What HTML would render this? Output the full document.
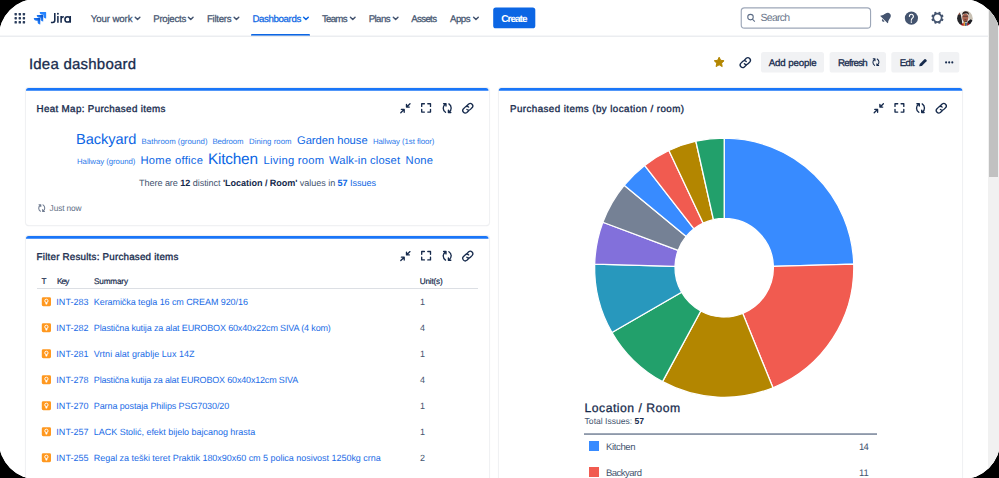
<!DOCTYPE html>
<html lang="en">
<head>
<meta charset="utf-8">
<title>Idea dashboard - Jira</title>
<style>
*{box-sizing:border-box;margin:0;padding:0}
html,body{width:999px;height:478px;overflow:hidden;background:#000}
body{font-family:"Liberation Sans",sans-serif;position:relative}
#clip{position:absolute;left:-1.1px;top:-1.1px;width:1001.2px;height:480.2px;border-radius:37.7px;overflow:hidden;background:#fff}
#frame{position:absolute;left:1.1px;top:1.1px;width:999px;height:478px;background:#fff}
.t{position:absolute;white-space:pre;line-height:normal;font-family:"Liberation Sans",sans-serif;text-rendering:geometricPrecision}
.abs{position:absolute}
.card{position:absolute;background:#fff;border-radius:3px;box-shadow:0 0 0 1px #F0F1F3, 0 0 2px rgba(9,30,66,.10), 0 1px 1px rgba(9,30,66,.15)}
#dashul{left:251.2px;top:33.8px;width:58.8px;height:2.4px;background:#0C66E4;border-radius:1px 1px 0 0}
#sbtrack{left:988px;top:0;width:11px;height:478px;background:#F1F1F1}
#sbthumb{left:989px;top:0;width:9px;height:177px;background:#C1C1C1}
svg.ov{position:absolute;left:0;top:0;width:999px;height:478px;overflow:visible}
</style>
</head>
<body>
<div id="clip"><div id="frame">
<!-- nav -->
<div id="dashul" class="abs"></div>
<!-- header buttons -->
<!-- cards -->
<div class="card" style="left:26px;top:88px;width:462.5px;height:137.4px"></div>
<div class="card" style="left:26px;top:236px;width:462.5px;height:300px"></div>
<div class="card" style="left:498.8px;top:88px;width:463.5px;height:450px"></div>
<div class="abs" style="left:36.6px;top:288px;width:441.4px;height:1px;background:#DCDFE4"></div>
<div class="abs" style="left:584.2px;top:433px;width:292.8px;height:2px;background:linear-gradient(#A9B1BF,#8590A2)"></div>
<!-- legend swatches -->
<div class="abs" style="left:589px;top:441px;width:10.2px;height:10.2px;background:#388BFF"></div>
<div class="abs" style="left:589px;top:466.8px;width:10.2px;height:10.2px;background:#F15B50"></div>

<svg class="ov" viewBox="0 0 999 478">
<defs>
<linearGradient id="jg" x1="0.9" y1="0.1" x2="0.45" y2="0.6"><stop offset="0.15" stop-color="#0C57D0"/><stop offset="1" stop-color="#2684FF"/></linearGradient>
<g id="ic-collapse" fill="none" stroke="#172B4D" stroke-width="1.35" stroke-linecap="round" stroke-linejoin="round">
<path d="M10.3 0.9 L7 4 M6.8 1.4 V4.2 H9.6"/><path d="M1.1 9.800 L4.300 6.700 M1.700 6.500 H4.500 V9.300"/></g>
<g id="ic-expand" fill="none" stroke="#172B4D" stroke-width="1.35" stroke-linecap="round" stroke-linejoin="round">
<path d="M0.7 3.4V0.7H3.4M6.8 0.7H9.5V3.4M9.5 6.4V9.1H6.8M3.4 9.1H0.7V6.4"/></g>
<g id="ic-refresh" fill="none" stroke="#172B4D" stroke-width="1.35" stroke-linecap="round" stroke-linejoin="round">
<path d="M3.6 9.2C0.6 7.2 0.6 3.2 3.4 1.2M1.7 0.6H4.1V3"/><path d="M7 0.8C10 2.8 10 6.8 7.2 8.8M8.9 9.4H6.5V7"/></g>
<g id="ic-link" fill="none" stroke="#172B4D" stroke-width="1.22" stroke-linecap="round" stroke-linejoin="round" transform="translate(-0.45,-0.45) scale(1.08)">
<path d="M5.1 3.3l1.7-1.7a2.35 2.35 0 0 1 3.3 3.3L8.4 6.6a2.35 2.35 0 0 1-3.3 0"/><path d="M6.8 7.8L5.1 9.5a2.35 2.35 0 0 1-3.3-3.3l1.7-1.7a2.35 2.35 0 0 1 3.3 0"/></g>
</defs>

<rect x="0" y="35.55" width="988" height="1.35" fill="#E9EBEF"/>
<!-- card top bars -->
<g fill="#1A76F8">
<path d="M26 91V90.6a2.600 2.600 0 0 1 2.600-2.600H485.900a2.600 2.600 0 0 1 2.600 2.600V90.850H26z"/>
<path d="M26 239V238.600a2.600 2.600 0 0 1 2.600-2.600H485.900a2.600 2.600 0 0 1 2.600 2.600V238.700H26z"/>
<path d="M498.800 91V90.600a2.600 2.600 0 0 1 2.600-2.600H959.700a2.600 2.600 0 0 1 2.600 2.600V90.850H498.800z"/>
</g>
<!-- app switcher -->
<g fill="#2C3E5D"><rect x="14.5" y="13.00" width="2.4" height="2.4" rx=".6"/><rect x="18.6" y="13.00" width="2.4" height="2.4" rx=".6"/><rect x="22.7" y="13.00" width="2.4" height="2.4" rx=".6"/><rect x="14.5" y="17.05" width="2.4" height="2.4" rx=".6"/><rect x="18.6" y="17.05" width="2.4" height="2.4" rx=".6"/><rect x="22.7" y="17.05" width="2.4" height="2.4" rx=".6"/><rect x="14.5" y="21.10" width="2.4" height="2.4" rx=".6"/><rect x="18.6" y="21.10" width="2.4" height="2.4" rx=".6"/><rect x="22.7" y="21.10" width="2.4" height="2.4" rx=".6"/></g>
<!-- jira software logo -->
<g transform="translate(32,10.1) scale(0.495)">
<path d="M27.545 4H15.53a5.423 5.423 0 0 0 5.422 5.423h2.213v2.137A5.423 5.423 0 0 0 28.584 16.98V5.04A1.04 1.04 0 0 0 27.545 4z" fill="#2684FF"/>
<path d="M21.6 9.987H9.585a5.423 5.423 0 0 0 5.421 5.421h2.214v2.144a5.423 5.423 0 0 0 5.421 5.414V11.027a1.04 1.04 0 0 0-1.04-1.04z" fill="url(#jg)"/>
<path d="M15.652 15.97H3.637a5.423 5.423 0 0 0 5.422 5.423h2.22v2.137a5.423 5.423 0 0 0 5.414 5.421V17.01a1.04 1.04 0 0 0-1.04-1.04z" fill="url(#jg)"/>
</g>
<!-- "Jira" wordmark drawn as paths -->
<g transform="translate(-0.5,0)" fill="none" stroke="#172B4D" stroke-width="1.55" stroke-linecap="butt" stroke-linejoin="round">
<path d="M55.3 12.9V20.2a2.2 2.2 0 0 1-2.2 2.2H51.4"/>
<path d="M58.4 16.1V22.7"/>
<path d="M61.6 22.7V16.1M61.6 19.3a2.6 2.6 0 0 1 2.7-2.6"/>
<circle cx="68.1" cy="19.4" r="2.65"/><path d="M70.75 16.1V22.7"/>
</g>
<circle cx="57.9" cy="13.7" r="0.95" fill="#172B4D"/>

<!-- nav chevrons -->
<g fill="none" stroke-width="1.5" stroke-linecap="round" stroke-linejoin="round"><path d="M135.25 17.3 l2.3 2.2 l2.3 -2.2" stroke="#44546F"/><path d="M188.45 17.3 l2.3 2.2 l2.3 -2.2" stroke="#44546F"/><path d="M234.15 17.3 l2.3 2.2 l2.3 -2.2" stroke="#44546F"/><path d="M303.65 17.3 l2.3 2.2 l2.3 -2.2" stroke="#0C66E4"/><path d="M350.45 17.3 l2.3 2.2 l2.3 -2.2" stroke="#44546F"/><path d="M393.35 17.3 l2.3 2.2 l2.3 -2.2" stroke="#44546F"/><path d="M473.65 17.3 l2.3 2.2 l2.3 -2.2" stroke="#44546F"/></g>

<rect x="493.2" y="7.5" width="42.1" height="20.8" rx="2.6" fill="#0C66E4"/>
<!-- search box + magnifier -->
<rect x="741.25" y="7.85" width="129.3" height="20.3" rx="3.2" fill="#fff" stroke="#9DA7B8" stroke-width="1.15"/>
<g fill="none" stroke="#5B6B85" stroke-width="1.05" stroke-linecap="round"><circle cx="750.5" cy="17.1" r="2.75"/><path d="M752.6 19.3l2 2"/></g>

<!-- bell (tilted) -->
<g transform="translate(885.9,17.7) rotate(45)" fill="#44546F">
<path d="M-5.200 2.700V2C-4 1.200 -3.600 -0.600 -3.300 -2.200C-2.800 -5 -1.400 -5.700 0 -5.700C1.400 -5.700 2.800 -5 3.300 -2.200C3.600 -0.600 4 1.200 5.200 2V2.700Z"/>
<path d="M-1.500 3.500H1.500A1.500 1.500 0 0 1 -1.500 3.500Z"/>
</g>
<!-- help -->
<circle cx="911.4" cy="18.1" r="6.6" fill="#44546F"/>
<path d="M909.4 16.3a2 2 0 1 1 3.1 1.65c-.8.5-1.15.9-1.15 2.2" fill="none" stroke="#fff" stroke-width="1.2" stroke-linecap="round"/>
<circle cx="911.35" cy="22.1" r=".8" fill="#fff"/>
<!-- gear -->
<g transform="translate(937.45,17.85)">
<g fill="#44546F">
<rect x="-1.15" y="-6.2" width="2.3" height="12.4" rx=".5" transform="rotate(22.5)"/>
<rect x="-1.15" y="-6.2" width="2.3" height="12.4" rx=".5" transform="rotate(67.5)"/>
<rect x="-1.15" y="-6.2" width="2.3" height="12.4" rx=".5" transform="rotate(112.5)"/>
<rect x="-1.15" y="-6.2" width="2.3" height="12.4" rx=".5" transform="rotate(157.5)"/>
</g>
<circle r="4.2" fill="#fff" stroke="#44546F" stroke-width="1.7"/>
</g>
<!-- avatar -->
<defs><clipPath id="av"><circle cx="964.9" cy="18.25" r="7.85"/></clipPath><filter id="avb" x="-20%" y="-20%" width="140%" height="140%"><feGaussianBlur stdDeviation="0.45"/></filter></defs>
<g clip-path="url(#av)"><g filter="url(#avb)">
<rect x="955" y="8" width="20" height="21" fill="#EFEDEA"/>
<path d="M966 8h9v14h-5z" fill="#C9C1B4"/>
<path d="M955 30V13.5l3.2-1.200 2.600 2.400 1 5.300 1.200 10z" fill="#26262B"/>
<ellipse cx="958.6" cy="13.4" rx="1.5" ry="1.7" fill="#8A5546"/>
<path d="M967.500 21.500l3.200-2.200 4.300 2.700V30h-8z" fill="#1F1F24"/>
<ellipse cx="965.3" cy="17.6" rx="3.1" ry="3.9" fill="#A9634F"/>
<path d="M962.100 15.600c-.7-5.600 7.300-5.900 7-.4l-.8-1.300c-1.700-.5-3.700-.5-5.300.2z" fill="#2A1E1A"/>
<rect x="962.700" y="15.700" width="5.400" height="1.200" rx=".5" fill="#5E3A33" opacity=".75"/>
<ellipse cx="965.400" cy="19.600" rx="1.300" ry=".6" fill="#7A3F36"/>
<path d="M963.400 19.900c1.200 1.300 2.700 1.300 3.900 0l-.3 2.200h-3.300z" fill="#6B4438"/>
<path d="M960.800 30l.8-5.800 1.900-1.800 1.500 7.600z" fill="#B01E24"/>
<path d="M967.300 22.800l2.300 1.300 .8 5.900h-3.400z" fill="#A81C22"/>
<rect x="963.7" y="21.900" width="1.300" height="6" fill="#DB9A33"/>
<rect x="965.200" y="22.600" width="1.500" height="6" fill="#253A63"/>
</g></g>

<g fill="#F1F2F4"><rect x="761" y="51.9" width="63" height="20.6" rx="2.6"/><rect x="829.6" y="51.9" width="56.4" height="20.6" rx="2.6"/><rect x="891.3" y="51.9" width="42" height="20.6" rx="2.6"/><rect x="938.8" y="51.9" width="20.5" height="20.6" rx="2.6"/></g>
<!-- star -->
<path d="M719.15 57.2l1.5 3.1 3.4.45-2.5 2.4.65 3.4-3.05-1.7-3.05 1.7.65-3.4-2.5-2.4 3.4-.45z" fill="#B38600" stroke="#B38600" stroke-width="1" stroke-linejoin="round"/>
<!-- header link icon -->
<use href="#ic-link" transform="translate(739.2,57) scale(1.02)"/>
<!-- refresh btn icon -->
<use href="#ic-refresh" transform="translate(871.9,58.4) scale(0.76)"/>
<!-- pencil -->
<g transform="translate(919.2,66.3)" fill="#172B4D"><path d="M0 0l.55-2.350 4.700-4.700a.85.85 0 0 1 1.200 0l.85.850a.85.85 0 0 1 0 1.200l-4.700 4.700z"/></g>
<!-- more dots -->
<g fill="#172B4D"><circle cx="946.1" cy="62.4" r="1.05"/><circle cx="949.2" cy="62.4" r="1.05"/><circle cx="952.3" cy="62.4" r="1.05"/></g>

<!-- gadget action icons -->
<use href="#ic-collapse" transform="translate(399.7,102.9)"/><use href="#ic-expand" transform="translate(421,103)"/><use href="#ic-refresh" transform="translate(441.9,103.1)"/><use href="#ic-link" transform="translate(461.8,102.7)"/>
<use href="#ic-collapse" transform="translate(399.7,250.7)"/><use href="#ic-expand" transform="translate(421,250.800)"/><use href="#ic-refresh" transform="translate(441.9,250.900)"/><use href="#ic-link" transform="translate(461.8,250.500)"/>
<use href="#ic-collapse" transform="translate(873.1,102.9)"/><use href="#ic-expand" transform="translate(894.3,103)"/><use href="#ic-refresh" transform="translate(915.2,103.1)"/><use href="#ic-link" transform="translate(935.3,102.7)"/>
<!-- just now icon -->
<g opacity=".62"><use href="#ic-refresh" transform="translate(37.7,204.300) scale(0.76)"/></g>

<!-- table issue type icons -->
<g transform="translate(41.8,297.3)"><rect width="9.2" height="8.9" rx="1.4" fill="#FF981F"/><circle cx="4.6" cy="3.55" r="1.65" fill="none" stroke="#fff" stroke-width="0.95"/><path d="M3.3 5.2h2.6l-.7 2h-1.200z" fill="#fff"/></g><g transform="translate(41.8,323.3)"><rect width="9.2" height="8.9" rx="1.4" fill="#FF981F"/><circle cx="4.6" cy="3.55" r="1.65" fill="none" stroke="#fff" stroke-width="0.95"/><path d="M3.3 5.2h2.6l-.7 2h-1.200z" fill="#fff"/></g><g transform="translate(41.8,349.3)"><rect width="9.2" height="8.9" rx="1.4" fill="#FF981F"/><circle cx="4.6" cy="3.55" r="1.65" fill="none" stroke="#fff" stroke-width="0.95"/><path d="M3.3 5.2h2.6l-.7 2h-1.200z" fill="#fff"/></g><g transform="translate(41.8,375.3)"><rect width="9.2" height="8.9" rx="1.4" fill="#FF981F"/><circle cx="4.6" cy="3.55" r="1.65" fill="none" stroke="#fff" stroke-width="0.95"/><path d="M3.3 5.2h2.6l-.7 2h-1.200z" fill="#fff"/></g><g transform="translate(41.8,401.3)"><rect width="9.2" height="8.9" rx="1.4" fill="#FF981F"/><circle cx="4.6" cy="3.55" r="1.65" fill="none" stroke="#fff" stroke-width="0.95"/><path d="M3.3 5.2h2.6l-.7 2h-1.200z" fill="#fff"/></g><g transform="translate(41.8,427.3)"><rect width="9.2" height="8.9" rx="1.4" fill="#FF981F"/><circle cx="4.6" cy="3.55" r="1.65" fill="none" stroke="#fff" stroke-width="0.95"/><path d="M3.3 5.2h2.6l-.7 2h-1.200z" fill="#fff"/></g><g transform="translate(41.8,453.3)"><rect width="9.2" height="8.9" rx="1.4" fill="#FF981F"/><circle cx="4.6" cy="3.55" r="1.65" fill="none" stroke="#fff" stroke-width="0.95"/><path d="M3.3 5.2h2.6l-.7 2h-1.200z" fill="#fff"/></g>

<!-- donut -->
<g stroke="#fff" stroke-width="1.3" stroke-linejoin="round"><path d="M724.20 138.10A129.6 129.6 0 0 1 853.75 264.13L773.38 266.34A49.2 49.2 0 0 0 724.20 218.50Z" fill="#388BFF"/><path d="M853.75 264.13A129.6 129.6 0 0 1 772.97 387.77L742.71 313.28A49.2 49.2 0 0 0 773.38 266.34Z" fill="#F15B50"/><path d="M772.97 387.77A129.6 129.6 0 0 1 662.52 381.68L700.78 310.97A49.2 49.2 0 0 0 742.71 313.28Z" fill="#B38600"/><path d="M662.52 381.68A129.6 129.6 0 0 1 611.96 332.50L681.59 292.30A49.2 49.2 0 0 0 700.78 310.97Z" fill="#22A06B"/><path d="M611.96 332.50A129.6 129.6 0 0 1 594.65 264.13L675.02 266.34A49.2 49.2 0 0 0 681.59 292.30Z" fill="#2898BD"/><path d="M594.65 264.13A129.6 129.6 0 0 1 602.83 222.26L678.12 250.45A49.2 49.2 0 0 0 675.02 266.34Z" fill="#8270DB"/><path d="M602.83 222.26A129.6 129.6 0 0 1 624.16 185.31L686.22 236.42A49.2 49.2 0 0 0 678.12 250.45Z" fill="#758195"/><path d="M624.16 185.31A129.6 129.6 0 0 1 644.60 165.43L693.98 228.87A49.2 49.2 0 0 0 686.22 236.42Z" fill="#388BFF"/><path d="M644.60 165.43A129.6 129.6 0 0 1 668.89 150.50L703.20 223.21A49.2 49.2 0 0 0 693.98 228.87Z" fill="#F15B50"/><path d="M668.89 150.50A129.6 129.6 0 0 1 695.86 141.24L713.44 219.69A49.2 49.2 0 0 0 703.20 223.21Z" fill="#B38600"/><path d="M695.86 141.24A129.6 129.6 0 0 1 724.20 138.10L724.20 218.50A49.2 49.2 0 0 0 713.44 219.69Z" fill="#22A06B"/></g>
</svg>

<!-- text -->
<span class="t" style="left:90.75px;top:14px;font-size:9.7px;color:#44546F;letter-spacing:-0.121px;-webkit-text-stroke:0.25px #44546F;">Your work</span>
<span class="t" style="left:153.25px;top:14px;font-size:9.7px;color:#44546F;letter-spacing:-0.286px;-webkit-text-stroke:0.25px #44546F;">Projects</span>
<span class="t" style="left:207.00px;top:14px;font-size:9.7px;color:#44546F;letter-spacing:-0.312px;-webkit-text-stroke:0.25px #44546F;">Filters</span>
<span class="t" style="left:252.50px;top:14px;font-size:9.7px;color:#0C66E4;letter-spacing:-0.389px;-webkit-text-stroke:0.25px #0C66E4;">Dashboards</span>
<span class="t" style="left:322.00px;top:14px;font-size:9.7px;color:#44546F;letter-spacing:-0.762px;-webkit-text-stroke:0.25px #44546F;">Teams</span>
<span class="t" style="left:368.75px;top:14px;font-size:9.7px;color:#44546F;letter-spacing:-0.621px;-webkit-text-stroke:0.25px #44546F;">Plans</span>
<span class="t" style="left:411.25px;top:14px;font-size:9.7px;color:#44546F;letter-spacing:-0.666px;-webkit-text-stroke:0.25px #44546F;">Assets</span>
<span class="t" style="left:450.00px;top:14px;font-size:9.7px;color:#44546F;letter-spacing:-0.531px;-webkit-text-stroke:0.25px #44546F;">Apps</span>
<span class="t" style="left:501.25px;top:14px;font-size:10px;color:#FFFFFF;font-weight:700;letter-spacing:-0.978px;">Create</span>
<span class="t" style="left:760.60px;top:12px;font-size:10.5px;color:#6B778C;letter-spacing:-0.776px;">Search</span>
<span class="t" style="left:28.90px;top:56px;font-size:15px;color:#172B4D;letter-spacing:0.226px;-webkit-text-stroke:0.3px #172B4D;">Idea dashboard</span>
<span class="t" style="left:768.80px;top:58px;font-size:9.7px;color:#172B4D;letter-spacing:-0.137px;-webkit-text-stroke:0.3px #172B4D;">Add people</span>
<span class="t" style="left:837.90px;top:58px;font-size:9.7px;color:#172B4D;letter-spacing:-0.687px;-webkit-text-stroke:0.3px #172B4D;">Refresh</span>
<span class="t" style="left:899.70px;top:58px;font-size:9.7px;color:#172B4D;letter-spacing:-0.568px;-webkit-text-stroke:0.3px #172B4D;">Edit</span>
<span class="t" style="left:36.50px;top:104px;font-size:9.8px;color:#172B4D;letter-spacing:0.338px;-webkit-text-stroke:0.33px #172B4D;">Heat Map: Purchased items</span>
<span class="t" style="left:36.60px;top:252px;font-size:9.8px;color:#172B4D;letter-spacing:0.207px;-webkit-text-stroke:0.33px #172B4D;">Filter Results: Purchased items</span>
<span class="t" style="left:510.00px;top:104px;font-size:9.8px;color:#172B4D;letter-spacing:0.413px;-webkit-text-stroke:0.33px #172B4D;">Purchased items (by location / room)</span>
<span class="t" style="left:76.00px;top:132px;font-size:14.6px;color:#0C66E4;letter-spacing:-0.063px;">Backyard</span>
<span class="t" style="left:141.60px;top:137px;font-size:7.8px;color:#2A78EA;letter-spacing:0.034px;">Bathroom (ground)</span>
<span class="t" style="left:212.40px;top:137px;font-size:7.8px;color:#2A78EA;letter-spacing:-0.073px;">Bedroom</span>
<span class="t" style="left:249.00px;top:137px;font-size:7.8px;color:#2A78EA;letter-spacing:0.055px;">Dining room</span>
<span class="t" style="left:297.00px;top:135px;font-size:11.2px;color:#0C66E4;letter-spacing:-0.028px;">Garden house</span>
<span class="t" style="left:373.00px;top:137px;font-size:7.8px;color:#2A78EA;letter-spacing:-0.055px;">Hallway (1st floor)</span>
<span class="t" style="left:77.00px;top:157px;font-size:7.8px;color:#2A78EA;letter-spacing:-0.036px;">Hallway (ground)</span>
<span class="t" style="left:140.40px;top:155px;font-size:11.2px;color:#0C66E4;letter-spacing:0.310px;">Home office</span>
<span class="t" style="left:208.00px;top:151px;font-size:15.4px;color:#0C66E4;letter-spacing:-0.224px;">Kitchen</span>
<span class="t" style="left:263.60px;top:155px;font-size:11.2px;color:#0C66E4;letter-spacing:0.257px;">Living room</span>
<span class="t" style="left:329.00px;top:155px;font-size:11.2px;color:#0C66E4;letter-spacing:0.137px;">Walk-in closet</span>
<span class="t" style="left:405.60px;top:155px;font-size:11.2px;color:#0C66E4;letter-spacing:0.217px;">None</span>
<span class="t" style="left:139.00px;top:178px;font-size:9.1px;color:#44546F;letter-spacing:-0.067px;">There are <b style="color:#172B4D">12</b> distinct <b style="color:#172B4D">'Location / Room'</b> values in <b style="color:#0C66E4">57</b> <span style="color:#0C66E4">Issues</span></span>
<span class="t" style="left:49.60px;top:203px;font-size:8.4px;color:#626F86;letter-spacing:-0.152px;">Just now</span>
<span class="t" style="left:41.40px;top:277px;font-size:8.2px;color:#172B4D;-webkit-text-stroke:0.2px #172B4D;">T</span>
<span class="t" style="left:57.00px;top:277px;font-size:8.2px;color:#172B4D;letter-spacing:-0.855px;-webkit-text-stroke:0.2px #172B4D;">Key</span>
<span class="t" style="left:94.00px;top:277px;font-size:8.2px;color:#172B4D;letter-spacing:-0.172px;-webkit-text-stroke:0.2px #172B4D;">Summary</span>
<span class="t" style="left:419.70px;top:277px;font-size:8.2px;color:#172B4D;letter-spacing:-0.185px;-webkit-text-stroke:0.2px #172B4D;">Unit(s)</span>
<span class="t" style="left:56.30px;top:297px;font-size:9px;color:#1A6CE6;letter-spacing:0.047px;">INT-283</span>
<span class="t" style="left:93.80px;top:297px;font-size:9px;color:#1A6CE6;letter-spacing:-0.075px;">Keramička tegla 16 cm CREAM 920/16</span>
<span class="t" style="left:419.90px;top:297px;font-size:9px;color:#44546F;">1</span>
<span class="t" style="left:56.30px;top:323px;font-size:9px;color:#1A6CE6;letter-spacing:0.047px;">INT-282</span>
<span class="t" style="left:93.80px;top:323px;font-size:9px;color:#1A6CE6;letter-spacing:-0.143px;">Plastična kutija za alat EUROBOX 60x40x22cm SIVA (4 kom)</span>
<span class="t" style="left:419.90px;top:323px;font-size:9px;color:#44546F;">4</span>
<span class="t" style="left:56.30px;top:349px;font-size:9px;color:#1A6CE6;letter-spacing:0.047px;">INT-281</span>
<span class="t" style="left:93.80px;top:349px;font-size:9px;color:#1A6CE6;letter-spacing:0.043px;">Vrtni alat grablje Lux 14Z</span>
<span class="t" style="left:419.90px;top:349px;font-size:9px;color:#44546F;">1</span>
<span class="t" style="left:56.30px;top:375px;font-size:9px;color:#1A6CE6;letter-spacing:0.047px;">INT-278</span>
<span class="t" style="left:93.80px;top:375px;font-size:9px;color:#1A6CE6;letter-spacing:-0.171px;">Plastična kutija za alat EUROBOX 60x40x12cm SIVA</span>
<span class="t" style="left:419.90px;top:375px;font-size:9px;color:#44546F;">4</span>
<span class="t" style="left:56.30px;top:401px;font-size:9px;color:#1A6CE6;letter-spacing:0.047px;">INT-270</span>
<span class="t" style="left:93.80px;top:401px;font-size:9px;color:#1A6CE6;letter-spacing:-0.103px;">Parna postaja Philips PSG7030/20</span>
<span class="t" style="left:419.90px;top:401px;font-size:9px;color:#44546F;">1</span>
<span class="t" style="left:56.30px;top:427px;font-size:9px;color:#1A6CE6;letter-spacing:0.047px;">INT-257</span>
<span class="t" style="left:93.80px;top:427px;font-size:9px;color:#1A6CE6;letter-spacing:-0.030px;">LACK Stolić, efekt bijelo bajcanog hrasta</span>
<span class="t" style="left:419.90px;top:427px;font-size:9px;color:#44546F;">1</span>
<span class="t" style="left:56.30px;top:453px;font-size:9px;color:#1A6CE6;letter-spacing:0.047px;">INT-255</span>
<span class="t" style="left:93.80px;top:453px;font-size:9px;color:#1A6CE6;letter-spacing:-0.032px;">Regal za teški teret Praktik 180x90x60 cm 5 polica nosivost 1250kg crna</span>
<span class="t" style="left:419.90px;top:453px;font-size:9px;color:#44546F;">2</span>
<span class="t" style="left:584.60px;top:401px;font-size:12.2px;color:#172B4D;letter-spacing:0.482px;-webkit-text-stroke:0.28px #172B4D;">Location / Room</span>
<span class="t" style="left:584.60px;top:416px;font-size:8.6px;color:#44546F;letter-spacing:-0.015px;">Total Issues: <b style="color:#172B4D">57</b></span>
<span class="t" style="left:606.00px;top:442px;font-size:9.5px;color:#44546F;letter-spacing:-0.365px;">Kitchen</span>
<span class="t" style="left:606.00px;top:468px;font-size:9.5px;color:#44546F;letter-spacing:-0.516px;">Backyard</span>
<span class="t" style="left:859.00px;top:442px;font-size:9.5px;color:#44546F;letter-spacing:-0.878px;">14</span>
<span class="t" style="left:859.00px;top:468px;font-size:9.5px;color:#44546F;letter-spacing:-0.175px;">11</span>


<!-- scrollbar -->
<div id="sbtrack" class="abs"></div>
<div id="sbthumb" class="abs"></div>
</div></div>
</body>
</html>
